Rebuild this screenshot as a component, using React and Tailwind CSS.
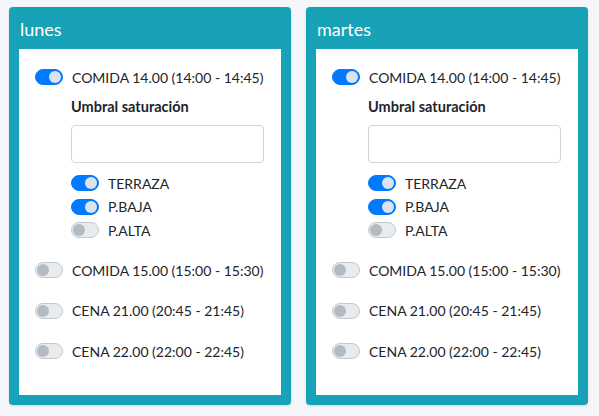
import React from 'react';

const days = [
    {
        name: 'lunes',
    },
    {
        name: 'martes',
    },
];

const others = [
    'COMIDA 15.00 (15:00 - 15:30)',
    'CENA 21.00 (20:45 - 21:45)',
    'CENA 22.00 (22:00 - 22:45)',
];

function Toggle({ on }) {
    if (on) {
        return (
            <span className="relative inline-block w-[28px] h-[16px] rounded-full bg-[#007bff] border border-[#007bff] shrink-0">
                <span className="absolute top-[1px] right-[1px] w-[12px] h-[12px] rounded-full bg-[#dde3ee]"></span>
            </span>
        )
    }
    return (
        <span className="relative inline-block w-[28px] h-[16px] rounded-full bg-[#e9ecef] border border-[#c3c8ce] shrink-0">
            <span className="absolute top-[1px] left-[1px] w-[12px] h-[12px] rounded-full bg-[#b4bac1]"></span>
        </span>
    )
}

function DayCard({ day }) {
    return (
        <div className="w-[282px] bg-[#17a2b8] rounded-[4px] shadow-sm px-[10px] pb-[10px]">
            <h3 className="text-white text-[18px] h-[42px] flex items-center px-[1px] pt-[2px]">{day.name}</h3>
            <div className="bg-white h-[346px] pt-[20px] pl-[16px] pr-[17px]">
                <div className="flex items-center gap-[9px] h-[16px] whitespace-nowrap">
                    <Toggle on />
                    <span>COMIDA 14.00 (14:00 - 14:45)</span>
                </div>
                <div className="pl-[36px]">
                    <div className="font-bold mt-[12px] leading-[20px] text-[14.5px]">Umbral saturación</div>
                    <input type="text" className="mt-[8px] w-full h-[38px] border border-[#ced4da] rounded-[4px]" />
                    <div className="mt-[12px] flex flex-col gap-[7.5px]">
                        <div className="flex items-center gap-[9px] h-[16px]">
                            <Toggle on />
                            <span>TERRAZA</span>
                        </div>
                        <div className="flex items-center gap-[9px] h-[16px]">
                            <Toggle on />
                            <span>P.BAJA</span>
                        </div>
                        <div className="flex items-center gap-[9px] h-[16px]">
                            <Toggle />
                            <span>P.ALTA</span>
                        </div>
                    </div>
                </div>
                <div className="mt-[24px] flex flex-col gap-[24.5px]">
                    {others.map((o) => (
                        <div key={o} className="flex items-center gap-[9px] h-[16px] whitespace-nowrap">
                            <Toggle />
                            <span>{o}</span>
                        </div>
                    ))}
                </div>
            </div>
        </div>
    )
}

export default function App() {
    return (
        <div className="w-[599px] h-[416px] bg-[#f4f6f9] text-[#212529] text-[14px] pt-[7px] pl-[9px] flex gap-[15px] items-start" style={{ fontFamily: 'Lato, sans-serif' }}>
            {days.map((d) => (
                <DayCard key={d.name} day={d} />
            ))}
        </div>
    )
}
